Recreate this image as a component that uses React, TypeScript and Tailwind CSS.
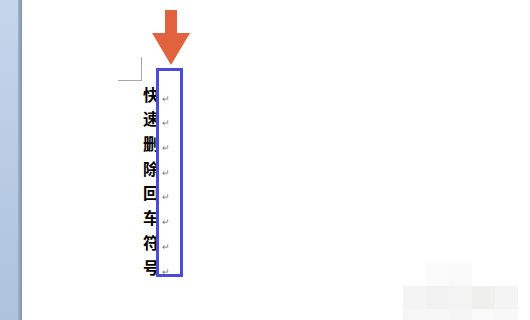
import React from "react";

const chars = ["快", "速", "删", "除", "回", "车", "符", "号"];

const App: React.FC = () => {
    return (
        <div className="w-[530px] h-[320px] flex overflow-hidden bg-white">
            <div className="w-[22px] h-full flex">
                <div className="w-[18px] h-full bg-gradient-to-b from-[#c4d6ec] to-[#aec2dc]" />
                <div className="w-[4px] h-full bg-gradient-to-r from-[#9fb3cc] to-[#7f93ac]" />
            </div>
            <div className="relative flex-1 h-full">
                <svg className="absolute left-[129px] top-[10px]" width="40" height="56" viewBox="0 0 40 56">
                    <polygon points="14,0 26,0 26,23 39,23 20,55 1,23 14,23" fill="#e0623f" />
                </svg>
                <div className="absolute left-[96px] top-[57px] w-[24px] h-[24px] border-r border-b border-[#a8a8a8]" />
                <div className="absolute left-[134px] top-[68px] w-[27px] h-[209px] border-[3px] border-[#4b4bd6]" />
                <div className="pl-[121px] pt-[81px] flex flex-col">
                    {chars.map((c) => (
                        <div key={c} className="flex items-end h-[24.7px]">
                            <span
                                className="text-[16px] leading-[24px] font-bold text-black"
                                style={{ fontFamily: '"Noto Sans CJK SC", sans-serif' }}
                            >
                                {c}
                            </span>
                            <span className="text-[9px] leading-[14px] text-[#7a7a7a] ml-[3px]">↵</span>
                        </div>
                    ))}
                </div>
                <div className="absolute left-[381px] top-[263px] grid grid-cols-5">
                    <div className="w-[23px] h-[23px]" />
                    <div className="w-[23px] h-[23px] bg-[#fbfbfb]" />
                    <div className="w-[23px] h-[23px] bg-[#f9f9f9]" />
                    <div className="w-[23px] h-[23px]" />
                    <div className="w-[23px] h-[23px]" />
                    <div className="w-[23px] h-[23px] bg-[#f4f4f4]" />
                    <div className="w-[23px] h-[23px] bg-[#f2f2f2]" />
                    <div className="w-[23px] h-[23px] bg-[#f3f3f3]" />
                    <div className="w-[23px] h-[23px] bg-[#efefed]" />
                    <div className="w-[23px] h-[23px] bg-[#f4f4f4]" />
                    <div className="w-[23px] h-[23px] bg-[#f6f6f6]" />
                    <div className="w-[23px] h-[23px] bg-[#f7f7f7]" />
                    <div className="w-[23px] h-[23px] bg-[#f5f5f5]" />
                    <div className="w-[23px] h-[23px] bg-[#fafafa]" />
                    <div className="w-[23px] h-[23px] bg-[#f8f8f8]" />
                </div>
            </div>
        </div>
    );
};

export default App;
